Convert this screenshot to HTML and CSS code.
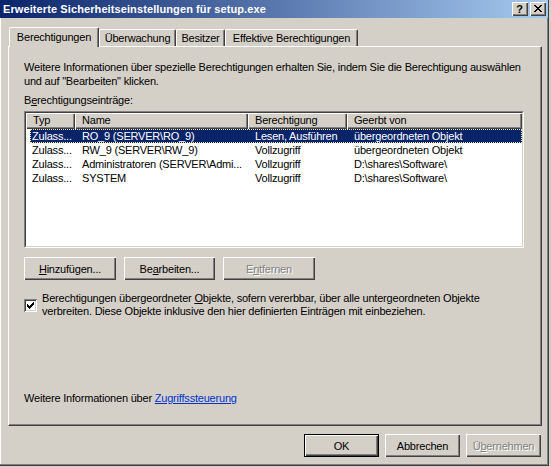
FILE: index.html
```html
<!DOCTYPE html>
<html lang="de">
<head>
<meta charset="utf-8">
<title>Erweiterte Sicherheitseinstellungen für setup.exe</title>
<link rel="stylesheet" href="styles.css">
</head>
<body>
<div class="window">
  <div class="titlebar">
    <span class="title">Erweiterte Sicherheitseinstellungen für setup.exe</span>
    <div class="caption-buttons">
      <span class="cap-btn help">?</span>
      <span class="cap-btn close"><svg width="8" height="7" viewBox="0 0 8 7" shape-rendering="crispEdges"><path d="M0 0h2v1h-2zM6 0h2v1h-2zM1 1h2v1h-2zM5 1h2v1h-2zM2 2h4v1h-4zM3 3h2v1h-2zM2 4h4v1h-4zM1 5h2v1h-2zM5 5h2v1h-2zM0 6h2v1h-2zM6 6h2v1h-2z" fill="#000"/></svg></span>
    </div>
  </div>
  <div class="content">
    <div class="tabs">
      <div class="tab active t1">Berechtigungen</div>
      <div class="tab t2">Überwachung</div>
      <div class="tab t3">Besitzer</div>
      <div class="tab t4">Effektive Berechtigungen</div>
    </div>
    <div class="panel">
      <p class="intro">Weitere Informationen über spezielle Berechtigungen erhalten Sie, indem Sie die Berechtigung auswählen<br>und auf "Bearbeiten" klicken.</p>
      <div class="label">B<u>e</u>rechtigungseinträge:</div>
      <div class="list">
        <div class="list-inner">
          <div class="header">
            <div class="hcell">Typ</div>
            <div class="hcell">Name</div>
            <div class="hcell">Berechtigung</div>
            <div class="hcell">Geerbt von</div>
          </div>
          <div class="row selected">
            <div class="cell first">Zulass...</div>
            <div class="cell">RO_9 (SERVER\RO_9)</div>
            <div class="cell">Lesen, Ausführen</div>
            <div class="cell">übergeordneten Objekt</div>
          </div>
          <div class="row">
            <div class="cell first">Zulass...</div>
            <div class="cell">RW_9 (SERVER\RW_9)</div>
            <div class="cell">Vollzugriff</div>
            <div class="cell">übergeordneten Objekt</div>
          </div>
          <div class="row">
            <div class="cell first">Zulass...</div>
            <div class="cell">Administratoren (SERVER\Admi...</div>
            <div class="cell">Vollzugriff</div>
            <div class="cell">D:\shares\Software\</div>
          </div>
          <div class="row">
            <div class="cell first">Zulass...</div>
            <div class="cell">SYSTEM</div>
            <div class="cell">Vollzugriff</div>
            <div class="cell">D:\shares\Software\</div>
          </div>
        </div>
      </div>
      <div class="list-buttons">
        <span class="btn wide1"><u>H</u>inzufügen...</span>
        <span class="btn wide2">Be<u>a</u>rbeiten...</span>
        <span class="btn wide1 disabled">E<u>n</u>tfernen</span>
      </div>
      <div class="inherit">
        <span class="checkbox"><svg width="9" height="9" viewBox="0 0 9 9" shape-rendering="crispEdges"><path d="M7 1h1v3h-1zM6 2h1v3h-1zM5 3h1v3h-1zM4 4h1v3h-1zM3 5h1v3h-1zM2 4h1v3h-1zM1 3h1v3h-1z" fill="#000"/></svg></span>
        <span class="inherit-text">Berechtigungen übergeordneter <u>O</u>bjekte, sofern vererbbar, über alle untergeordneten Objekte<br>verbreiten. Diese Objekte inklusive den hier definierten Einträgen mit einbeziehen.</span>
      </div>
      <div class="more">Weitere Informationen über <a class="link" href="#">Zugriffssteuerung</a></div>
    </div>
    <div class="actions">
      <span class="btn dialog default">OK</span>
      <span class="btn dialog">Abbrechen</span>
      <span class="btn dialog disabled">Ü<u>b</u>ernehmen</span>
    </div>
  </div>
</div>
</body>
</html>
```
FILE: styles.css
```css
* { box-sizing: border-box; }
html, body { margin: 0; padding: 0; }
body {
  width: 551px;
  height: 467px;
  overflow: hidden;
  background: #d4d0c8;
  font-family: "Liberation Sans", Arial, sans-serif;
  font-size: 11px;
  font-weight: normal;
  letter-spacing: -0.2px;
  color: #000;
}
u { text-decoration: underline; text-underline-offset: 1px; }

.window {
  width: 549px;
  height: 466px;
  border-right: 1px solid #404040;
  border-bottom: 1px solid #404040;
  box-shadow: inset -1px -1px #808080, inset 1px 0 #ffffff;
  display: flex;
  flex-direction: column;
}

.titlebar {
  height: 18px;
  display: flex;
  align-items: center;
  padding-left: 3px;
  background: linear-gradient(to right, #0a246a, #a6caf0);
}
.title {
  color: #fff;
  font-weight: bold;
  font-size: 11px;
  letter-spacing: 0.1px;
  white-space: nowrap;
}
.caption-buttons {
  margin-left: auto;
  margin-right: 2px;
  display: flex;
  gap: 2px;
}
.cap-btn {
  width: 16px;
  height: 14px;
  background: #d4d0c8;
  box-shadow: inset 1px 1px #ffffff, inset -1px -1px #404040, inset -2px -2px #808080;
  display: flex;
  align-items: center;
  justify-content: center;
}
.cap-btn.help {
  font-weight: bold;
  font-size: 11px;
  line-height: 14px;
  padding-right: 1px;
  letter-spacing: 0;
}
.cap-btn.close svg { margin-left: -1px; margin-top: -1px; }

.content {
  padding: 9px 0 0 8px;
  display: flex;
  flex-direction: column;
}

.tabs {
  display: flex;
  align-items: flex-end;
  height: 20px;
  padding-left: 1px;
  margin-bottom: -1px;
  position: relative;
  z-index: 1;
}
.tab {
  height: 17px;
  margin-bottom: 1px;
  background: #d4d0c8;
  border-top: 1px solid #fff;
  border-left: 1px solid #fff;
  border-right: 1px solid #404040;
  box-shadow: inset -1px 0 #808080;
  border-radius: 2px 2px 0 0;
  text-align: center;
  line-height: 15px;
  padding-top: 1px;
  white-space: nowrap;
}
.tab.active {
  height: 20px;
  margin-bottom: 0;
  line-height: 18px;
  padding-top: 0;
}
.t1 { width: 90px; }
.t2 { width: 77px; }
.t3 { width: 49px; }
.t4 { width: 133px; }

.panel {
  width: 534px;
  height: 380px;
  border-top: 1px solid #fff;
  border-left: 1px solid #fff;
  border-right: 1px solid #404040;
  border-bottom: 1px solid #404040;
  box-shadow: inset -1px -1px #808080;
  padding: 13px 15px 0;
  display: flex;
  flex-direction: column;
}
.intro {
  margin: 0;
  line-height: 14px;
  white-space: nowrap;
}
.label {
  margin-top: 5px;
  line-height: 14px;
}

.list {
  margin-top: 4px;
  width: 500px;
  height: 137px;
  border-top: 1px solid #808080;
  border-left: 1px solid #808080;
  border-right: 1px solid #fff;
  border-bottom: 1px solid #fff;
}
.list-inner {
  height: 100%;
  background: #fff;
  border-top: 1px solid #404040;
  border-left: 1px solid #404040;
  border-right: 1px solid #d4d0c8;
  border-bottom: 1px solid #d4d0c8;
}
.header {
  display: grid;
  grid-template-columns: 49px 173px 99px 175px;
  height: 16px;
}
.hcell {
  background: #d4d0c8;
  box-shadow: inset 1px 1px #fff, inset -1px -1px #404040, inset -2px -2px #808080;
  padding-left: 7px;
  line-height: 15px;
  white-space: nowrap;
  overflow: hidden;
}
.row {
  display: grid;
  grid-template-columns: 45px 173px 99px 175px;
  margin-left: 4px;
  height: 14px;
  line-height: 14px;
  white-space: nowrap;
}
.cell { padding-left: 7px; overflow: hidden; }
.cell.first { padding-left: 2px; }
.row.selected {
  background: #0a246a;
  color: #fff;
  outline: 1px dotted #f0e8a0;
  outline-offset: -1px;
}

.btn {
  display: flex;
  align-items: center;
  justify-content: center;
  height: 23px;
  background: #d4d0c8;
  box-shadow: inset 1px 1px #fff, inset -1px -1px #404040, inset -2px -2px #808080;
  white-space: nowrap;
}
.btn.disabled {
  color: #808080;
  text-shadow: 1px 1px #fff;
}
.list-buttons {
  display: flex;
  gap: 8px;
  margin-top: 9px;
}
.wide1 { width: 92px; }
.wide2 { width: 91px; }

.inherit {
  display: flex;
  align-items: center;
  gap: 5px;
  margin-top: 12px;
}
.checkbox {
  flex-shrink: 0;
  width: 13px;
  height: 13px;
  background: #fff;
  box-shadow: inset 1px 1px #808080, inset -1px -1px #fff, inset 2px 2px #404040, inset -2px -2px #d4d0c8;
  display: flex;
  align-items: center;
  justify-content: center;
}
.inherit-text { line-height: 13px; white-space: nowrap; }

.more {
  margin-top: 73px;
  line-height: 14px;
}
.link {
  color: #0033cc;
  text-decoration: underline;
}

.actions {
  display: flex;
  justify-content: flex-end;
  gap: 6px;
  margin-top: 8px;
  padding-right: 7px;
}
.btn.dialog { width: 75px; }
.btn.default {
  border: 1px solid #000;
}
```
